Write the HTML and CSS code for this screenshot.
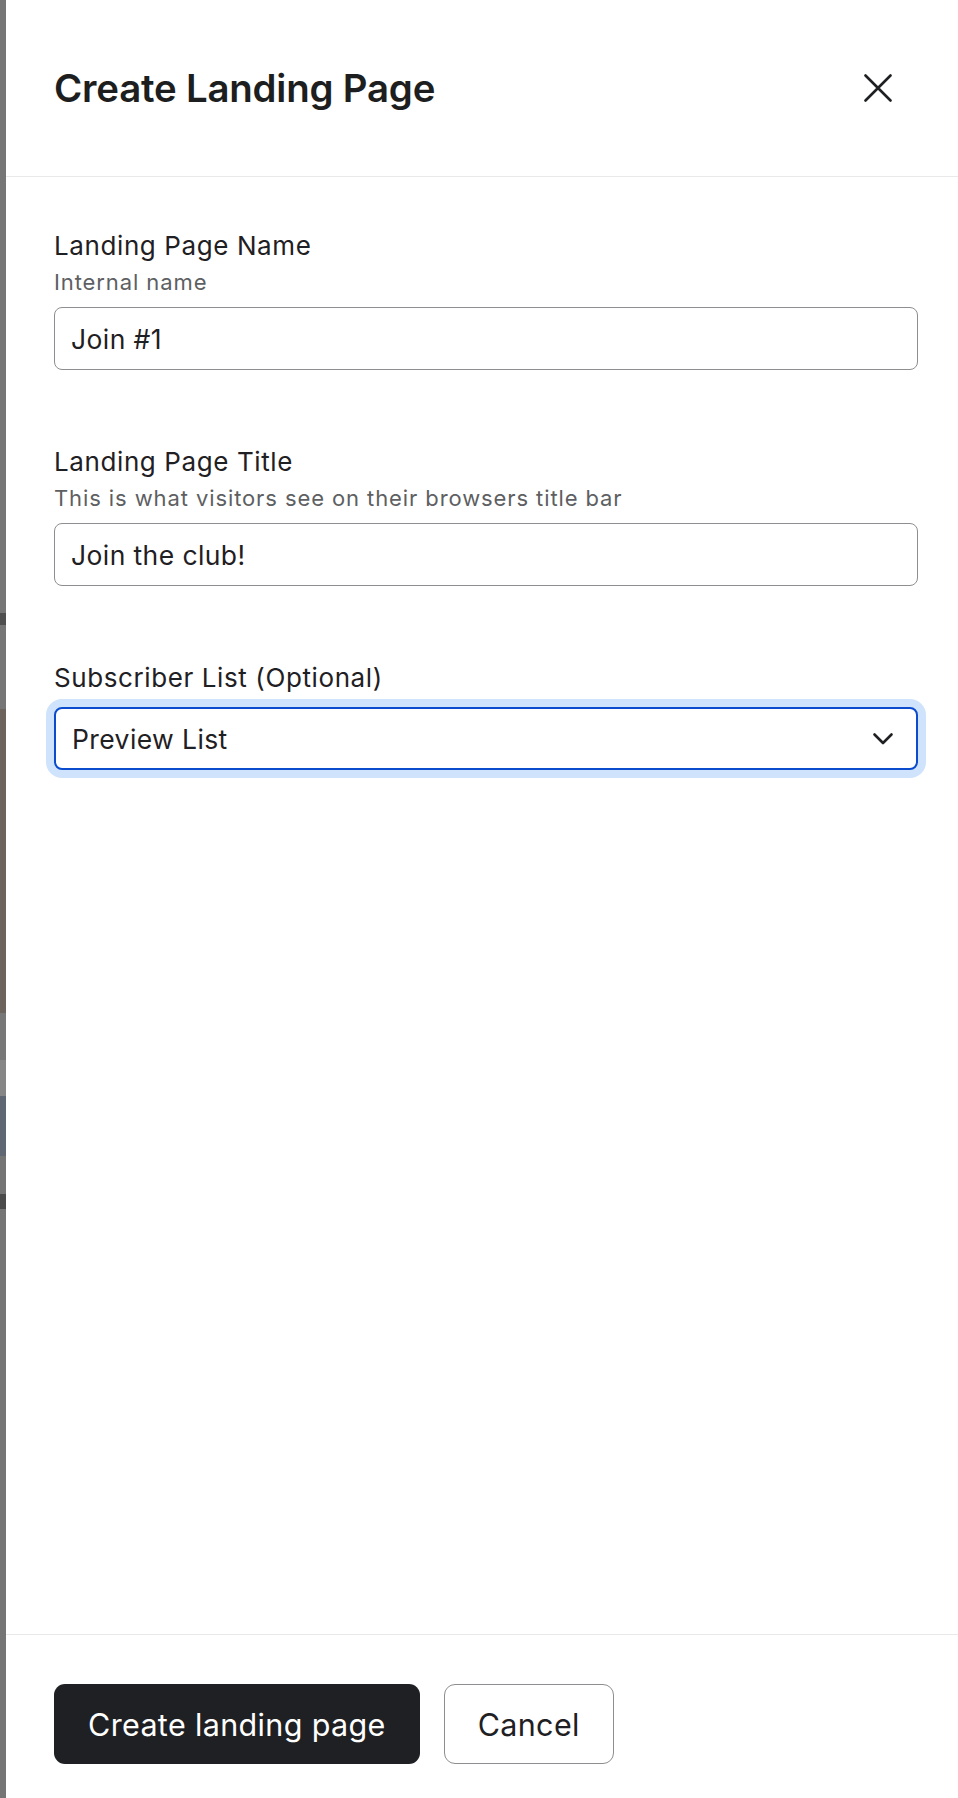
FILE: index.html
```html
<!DOCTYPE html>
<html lang="en">
<head>
  <meta charset="UTF-8" />
  <meta name="viewport" content="width=device-width, initial-scale=1.0" />
  <title>Create Landing Page</title>
  <link rel="stylesheet" href="styles.css">
</head>
<body>
  <div class="backdrop"></div>
  <div class="drawer">
    <div class="drawer-header">
      <h1>Create Landing Page</h1>
      <button class="close-btn" aria-label="Close">
        <svg width="28" height="28" viewBox="0 0 28 28" fill="none" stroke="#1f2023" stroke-width="2.6" stroke-linecap="round">
          <path d="M1.5 1.5 L26.5 26.5 M26.5 1.5 L1.5 26.5" />
        </svg>
      </button>
    </div>

    <form class="drawer-body" onsubmit="return false">
      <div class="field">
        <label for="lpName">Landing Page Name</label>
        <div class="hint">Internal name</div>
        <input type="text" id="lpName" class="text-input" value="Join #1" />
      </div>

      <div class="field">
        <label for="lpTitle">Landing Page Title</label>
        <div class="hint">This is what visitors see on their browsers title bar</div>
        <input type="text" id="lpTitle" class="text-input" value="Join the club!" />
      </div>

      <div class="field">
        <label for="lpList">Subscriber List (Optional)</label>
        <div class="select-wrap">
          <select id="lpList" class="select-input is-focused">
            <option>Preview List</option>
            <option>Newsletter</option>
          </select>
          <svg class="chevron" width="22" height="14" viewBox="0 0 22 14" fill="none" stroke="#1f2023" stroke-width="2.6" stroke-linecap="round" stroke-linejoin="round">
            <path d="M2.5 2.5 L11 11 L19.5 2.5" />
          </svg>
        </div>
      </div>
    </form>

    <div class="drawer-footer">
      <button class="btn btn-primary">Create landing page</button>
      <button class="btn btn-secondary">Cancel</button>
    </div>
  </div>
</body>
</html>
```

FILE: styles.css
```css
* {
  box-sizing: border-box;
}
html, body {
  height: 100%;
}
body {
  margin: 0;
  display: flex;
  font-family: Inter, "Noto Sans", sans-serif;
  color: #1f2023;
  background: #fff;
  overflow: hidden;
}

/* dimmed page peeking out behind the drawer */
.backdrop {
  width: 6px;
  flex-shrink: 0;
  background: linear-gradient(to bottom,
    #767676 0, #767676 613px,
    #4f4f4f 613px, #4f4f4f 625px,
    #767676 625px, #767676 709px,
    #6c645c 709px, #6c645c 1013px,
    #777777 1013px, #777777 1060px,
    #868686 1060px, #868686 1096px,
    #5f6872 1096px, #5f6872 1156px,
    #747474 1156px, #747474 1194px,
    #4a4a4a 1194px, #4a4a4a 1209px,
    #757575 1209px);
}

.drawer {
  flex: 1;
  display: flex;
  flex-direction: column;
  background: #fff;
  min-width: 0;
}

.drawer-header {
  height: 177px;
  flex-shrink: 0;
  display: flex;
  align-items: center;
  justify-content: space-between;
  padding: 0 58px 0 48px;
  border-bottom: 1.5px solid #e9e9ea;
}
.drawer-header h1 {
  margin: 0;
  font-size: 38.4px;
  font-weight: 600;
  letter-spacing: -0.2px;
  color: #1d1e20;
}
.close-btn {
  width: 44px;
  height: 44px;
  border: none;
  background: none;
  padding: 0;
  display: flex;
  align-items: center;
  justify-content: center;
  cursor: pointer;
}

.drawer-body {
  flex: 1;
  padding: 51px 40px 0 48px;
  display: flex;
  flex-direction: column;
  gap: 74px;
}
.field {
  display: flex;
  flex-direction: column;
}
.field label {
  font-size: 26px;
  line-height: 36px;
  letter-spacing: 0.6px;
  color: #1f2023;
}
.hint {
  margin-top: 4px;
  font-size: 22px;
  line-height: 28px;
  letter-spacing: 0.9px;
  color: #5e5f62;
}

.text-input,
.select-input {
  width: 100%;
  height: 63px;
  margin-top: 11px;
  padding: 0 16px;
  font-family: inherit;
  font-size: 26.5px;
  letter-spacing: 0.4px;
  color: #1f2023;
  background: #fff;
  border: 1.5px solid #8e8e90;
  border-radius: 8px;
  outline: none;
}

.select-wrap {
  position: relative;
  margin-top: 11px;
}
.select-input {
  margin-top: 0;
  appearance: none;
  -webkit-appearance: none;
  cursor: pointer;
}
.select-input.is-focused {
  border: 2px solid #0b4ccf;
  box-shadow: 0 0 0 8px #d0e3fc;
}
.chevron {
  position: absolute;
  right: 24px;
  top: 25px;
  pointer-events: none;
}

.drawer-footer {
  flex-shrink: 0;
  display: flex;
  gap: 24px;
  padding: 49px 40px 34px 48px;
  border-top: 1.5px solid #e9e9ea;
}
.btn {
  height: 80px;
  padding: 0 34px;
  font-family: inherit;
  font-size: 30.5px;
  letter-spacing: 0.35px;
  border-radius: 11px;
  cursor: pointer;
}
.btn-primary {
  background: #1f2023;
  color: #fff;
  border: none;
}
.btn-secondary {
  background: #fff;
  color: #1f2023;
  border: 1.5px solid #8e8e90;
  padding: 0 33px;
}
```
